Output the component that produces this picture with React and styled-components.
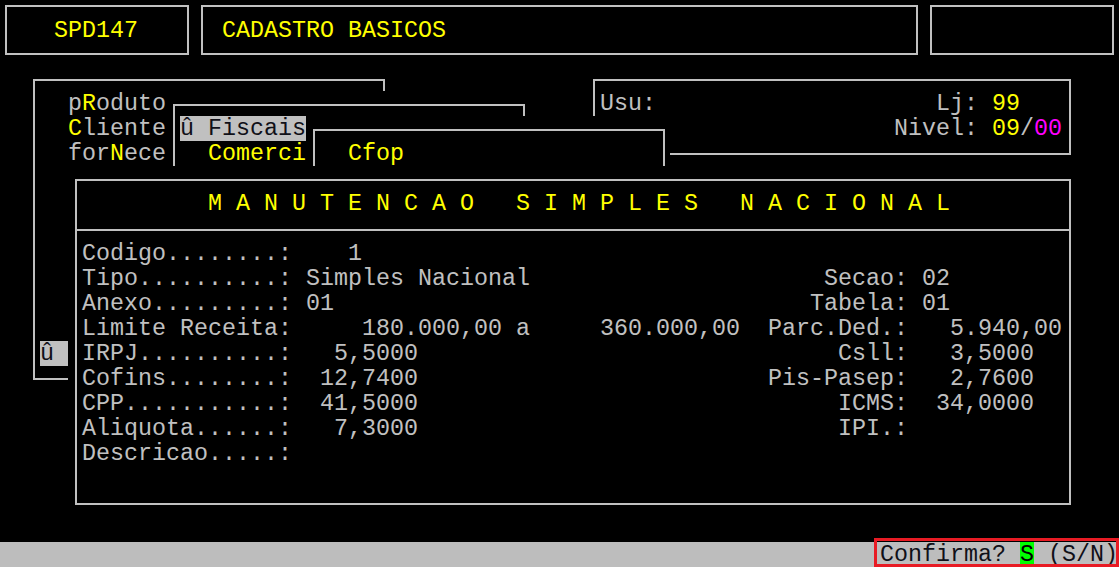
import React from "react";
import styled, { createGlobalStyle } from "styled-components";

const CW = 14;
const RH = 25;
const ROW0 = 3;

const Global = createGlobalStyle`
  html, body { margin: 0; padding: 0; background: #000; overflow: hidden; }
  * { box-sizing: border-box; }
`;

const Screen = styled.div`
  width: 1119px;
  height: 567px;
  background: #000;
  color: #c0c0c0;
  font-family: "Liberation Mono", "Courier New", monospace;
  font-size: 23.333px;
  line-height: 25px;
  display: grid;
  grid-template-rows: 66px 476px 25px;
  overflow: hidden;
`;

const TopBar = styled.div`
  display: flex;
  gap: 12px;
  padding: 5px 5px 0 5px;
  align-items: flex-start;
`;

const TitleBox = styled.div`
  width: ${(p) => p.$w}px;
  height: 50px;
  border: 2px solid #c0c0c0;
  display: flex;
  align-items: center;
  padding-left: ${(p) => p.$pad || 0}px;
  padding-top: 2px;
  color: #ffff00;
  white-space: pre;
`;

const Desktop = styled.div`
  position: relative;
`;

const Win = styled.div`
  position: absolute;
  left: ${(p) => p.$c * CW - 2}px;
  top: ${(p) => (p.$r - ROW0) * RH}px;
  width: ${(p) => p.$w * CW}px;
  height: ${(p) => p.$h * RH}px;
  background: #000;
  &::before {
    content: "";
    position: absolute;
    left: 7px;
    right: 5px;
    top: 13px;
    bottom: 11px;
    border: 2px solid #c0c0c0;
  }
`;

const Body = styled.div`
  position: relative;
  display: grid;
  grid-template-columns: repeat(${(p) => p.$w}, ${CW}px);
  grid-template-rows: repeat(${(p) => p.$h}, ${RH}px);
  width: 100%;
  height: 100%;
`;

const Text = styled.span`
  grid-column-start: ${(p) => p.$x + 1};
  grid-row: ${(p) => p.$y + 1};
  justify-self: start;
  white-space: pre;
  padding-top: 2px;
  line-height: 23px;
  color: ${(p) => (p.$yellow ? "#ffff00" : "#c0c0c0")};
  ${(p) => (p.$hl ? "background: #c0c0c0; color: #101018;" : "")}
`;

const Y = styled.span`
  color: #ffff00;
`;
const M = styled.span`
  color: #ff00ff;
`;

const Sep = styled.div`
  grid-column: 1 / -1;
  grid-row: ${(p) => p.$y + 1};
  align-self: start;
  margin: 13px 5px 0 7px;
  height: 2px;
  background: #c0c0c0;
`;

const StatusBar = styled.div`
  position: relative;
  background: #bdbdbd;
  color: #101018;
  display: flex;
  justify-content: flex-end;
  white-space: pre;
  padding-top: 2px;
  line-height: 23px;
`;

const Prompt = styled.span`
  width: ${17 * CW}px;
  margin-right: 1px;
`;

const Key = styled.span`
  background: #00ff00;
  color: #000;
`;

const Frame = styled.div`
  position: absolute;
  right: 0;
  bottom: 0;
  width: 245px;
  height: 29px;
  border: 3px solid #e81b24;
  pointer-events: none;
`;

const leftFields = [
  { label: "Codigo........:", value: "1", vx: 20 },
  { label: "Tipo..........:", value: "Simples Nacional", vx: 17 },
  { label: "Anexo.........:", value: "01", vx: 17 },
  { label: "Limite Receita:", value: "180.000,00 a", vx: 21, extra: { x: 38, t: "360.000,00" } },
  { label: "IRPJ..........:", value: "5,5000", vx: 19 },
  { label: "Cofins........:", value: "12,7400", vx: 18 },
  { label: "CPP...........:", value: "41,5000", vx: 18 },
  { label: "Aliquota......:", value: "7,3000", vx: 19 },
  { label: "Descricao.....:", value: "", vx: 17 },
];

const rightFields = [
  null,
  { label: "Secao:", lx: 54, value: "02", vx: 61 },
  { label: "Tabela:", lx: 53, value: "01", vx: 61 },
  { label: "Parc.Ded.:", lx: 50, value: "5.940,00", vx: 63 },
  { label: "Csll:", lx: 55, value: "3,5000", vx: 63 },
  { label: "Pis-Pasep:", lx: 50, value: "2,7600", vx: 63 },
  { label: "ICMS:", lx: 55, value: "34,0000", vx: 62 },
  { label: "IPI.:", lx: 55, value: "", vx: 62 },
  null,
];

export default function App() {
  return (
    <>
      <Global />
      <Screen>
        <TopBar>
          <TitleBox $w={184} $pad={47}>SPD147</TitleBox>
          <TitleBox $w={717} $pad={19}>CADASTRO BASICOS</TitleBox>
          <TitleBox $w={184} />
        </TopBar>

        <Desktop>
          {/* main menu */}
          <Win $c={2} $r={3} $w={26} $h={13}>
            <Body $w={26} $h={13}>
              <Text $x={3} $y={1}>p<Y>R</Y>oduto</Text>
              <Text $x={3} $y={2}><Y>C</Y>liente</Text>
              <Text $x={3} $y={3}>for<Y>N</Y>ece</Text>
              <Text $x={1} $y={11} $hl>û </Text>
            </Body>
          </Win>

          {/* user info */}
          <Win $c={42} $r={3} $w={35} $h={4}>
            <Body $w={35} $h={4}>
              <Text $x={1} $y={1}>Usu:</Text>
              <Text $x={25} $y={1}>Lj: <Y>99</Y></Text>
              <Text $x={22} $y={2}>Nivel: <Y>09</Y>/<M>00</M></Text>
            </Body>
          </Win>

          {/* submenu */}
          <Win $c={12} $r={4} $w={26} $h={7}>
            <Body $w={26} $h={7}>
              <Text $x={1} $y={1} $hl>û Fiscais</Text>
              <Text $x={3} $y={2} $yellow>Comerciais</Text>
            </Body>
          </Win>

          {/* sub-submenu */}
          <Win $c={22} $r={5} $w={26} $h={6}>
            <Body $w={26} $h={6}>
              <Text $x={3} $y={1} $yellow>Cfop</Text>
            </Body>
          </Win>

          {/* main form */}
          <Win $c={5} $r={7} $w={72} $h={14}>
            <Body $w={72} $h={14}>
              <Text $x={10} $y={1} $yellow>
                M A N U T E N C A O   S I M P L E S   N A C I O N A L
              </Text>
              <Sep $y={2} />
              {leftFields.map((f, i) => (
                <React.Fragment key={"l" + i}>
                  <Text $x={1} $y={3 + i}>{f.label}</Text>
                  {f.value && <Text $x={f.vx} $y={3 + i}>{f.value}</Text>}
                  {f.extra && <Text $x={f.extra.x} $y={3 + i}>{f.extra.t}</Text>}
                </React.Fragment>
              ))}
              {rightFields.map((f, i) =>
                f ? (
                  <React.Fragment key={"r" + i}>
                    <Text $x={f.lx} $y={3 + i}>{f.label}</Text>
                    {f.value && <Text $x={f.vx} $y={3 + i}>{f.value}</Text>}
                  </React.Fragment>
                ) : null
              )}
            </Body>
          </Win>
        </Desktop>

        <StatusBar>
          <Prompt>
            Confirma? <Key>S</Key> (S/N)
          </Prompt>
          <Frame />
        </StatusBar>
      </Screen>
    </>
  );
}
